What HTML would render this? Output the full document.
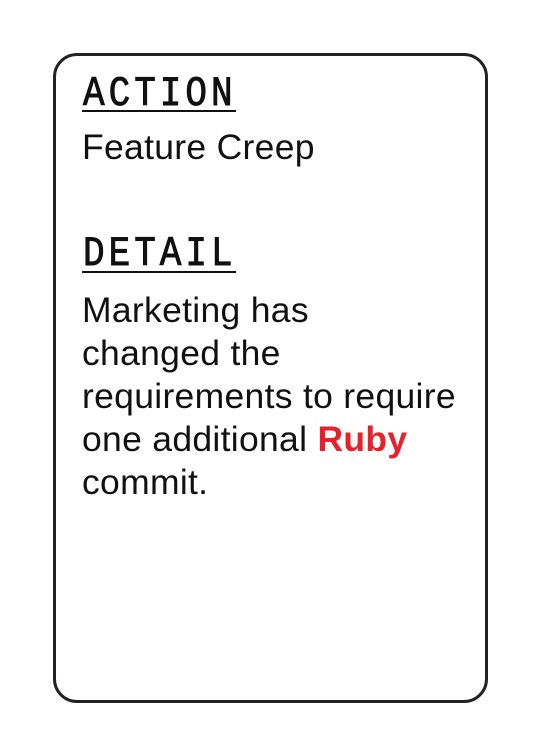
<!DOCTYPE html>
<html><head><style>
html,body{margin:0;padding:0;background:#fff;width:540px;height:756px;overflow:hidden}
.card{position:absolute;left:53px;top:53px;width:429px;height:644px;border:3px solid #222;border-radius:24px;box-sizing:content-box}
.h{position:absolute;left:83px;font-family:"Liberation Mono",monospace;font-size:36px;font-weight:normal;-webkit-text-stroke:0.8px #111;letter-spacing:4px;line-height:36px;color:#111;transform:scaleY(1.15);transform-origin:0 0}
.u{position:absolute;left:82px;width:154px;height:2px;background:#111}
.t{position:absolute;left:82px;font-family:"Liberation Sans",sans-serif;font-size:35.5px;letter-spacing:0.3px;line-height:43px;color:#111}
.r{color:#e8202a;font-weight:bold}
</style></head><body>
<div class="card"></div>
<div class="h" style="top:74px">ACTION</div>
<div class="u" style="top:110px"></div>
<div class="t" style="top:126px">Feature Creep</div>
<div class="h" style="top:234px">DETAIL</div>
<div class="u" style="top:271px"></div>
<div class="t" style="top:289px;width:430px">Marketing has<br>changed the<br>requirements to require<br>one additional <span class="r">Ruby</span><br>commit.</div>
</body></html>
